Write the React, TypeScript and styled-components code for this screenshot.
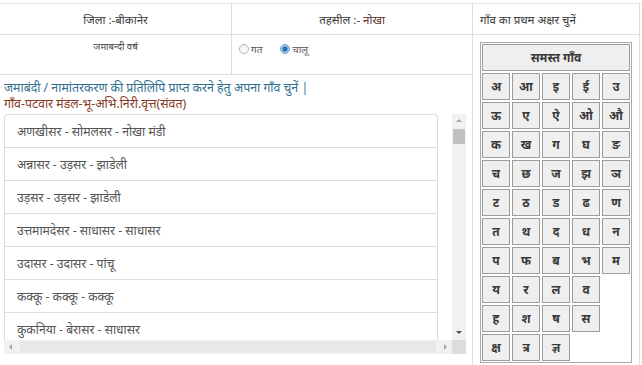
import React from "react";
import styled, { createGlobalStyle } from "styled-components";

const Global = createGlobalStyle`
  html, body { margin: 0; padding: 0; background: #fff; }
  body { font-family: "Noto Sans", "Liberation Sans", sans-serif; color: #333; }
  * { box-sizing: border-box; }
`;

const Page = styled.div`
  width: 642px;
  height: 365px;
  overflow: hidden;
  padding-top: 3px;
`;

const Layout = styled.div`
  display: grid;
  grid-template-columns: 232px 240px 168px;
  grid-template-rows: 31px 40px 290px;
  border-top: 1px solid #e6e6e6;
`;

const Cell = styled.div<{ $right?: boolean; $bottom?: boolean; $left?: boolean }>`
  border-right: ${(p) => (p.$right ? "1px solid #dedede" : "none")};
  border-left: ${(p) => (p.$left ? "1px solid #dedede" : "none")};
  border-bottom: ${(p) => (p.$bottom ? "1px solid #dedede" : "none")};
`;

const HeadCell = styled(Cell)<{ $align?: string }>`
  display: flex;
  align-items: center;
  justify-content: ${(p) => p.$align || "center"};
  padding-left: ${(p) => (p.$align ? "7px" : "0")};
  font-size: 11.5px;
  color: #3a3a3a;
`;

const Maroon = styled.span`
  color: #5c2e2e;
`;

const YearCell = styled(Cell)`
  display: flex;
  justify-content: center;
  padding-top: 5px;
  font-size: 9.5px;
  color: #444;
`;

const RadioCell = styled(Cell)`
  display: flex;
  align-items: flex-start;
  gap: 18px;
  padding: 8px 0 0 7px;
`;

const RadioOpt = styled.label`
  display: flex;
  align-items: center;
  gap: 2px;
  font-size: 10px;
  color: #555;
  line-height: 12px;
`;

const RadioDot = styled.span<{ $on?: boolean }>`
  width: 10px;
  height: 10px;
  border-radius: 50%;
  border: 1px solid ${(p) => (p.$on ? "#6aa3d8" : "#b5b5b5")};
  background: ${(p) =>
    p.$on
      ? "radial-gradient(circle, #2b6fb3 0 2.2px, #8ec0ea 2.8px, #cfe5f7 100%)"
      : "linear-gradient(#f2f2f2, #fff)"};
`;

const LetterCol = styled(Cell)`
  grid-row: 2 / 4;
  grid-column: 3;
  padding: 7px 0 0 7px;
`;

const LetterGrid = styled.div`
  display: grid;
  grid-template-columns: repeat(5, 28px);
  grid-auto-rows: 27px;
  gap: 2px;
  padding: 1px;
  width: 152px;
  border: 1px solid #a9a9a9;
  background: #fff;
`;

const LetterBtn = styled.div<{ $wide?: boolean }>`
  grid-column: ${(p) => (p.$wide ? "1 / 6" : "auto")};
  display: flex;
  align-items: center;
  justify-content: center;
  background: #efefef;
  border: 1px solid #9c9c9c;
  font-size: 12px;
  font-weight: bold;
  color: #3a3a3a;
`;

const ListArea = styled.div`
  grid-column: 1 / 3;
  grid-row: 3;
  padding: 5px 0 0 4px;
`;

const InfoLine = styled.div<{ $tone: string }>`
  font-size: 12.3px;
  line-height: 16px;
  height: 16px;
  color: ${(p) => p.$tone};
  white-space: nowrap;
`;

const ScrollBox = styled.div`
  margin-top: 2px;
  width: 462px;
  height: 240px;
  display: grid;
  grid-template-columns: 448px 14px;
  grid-template-rows: 226px 14px;
`;

const Viewport = styled.div`
  overflow: hidden;
`;

const ListGroup = styled.div`
  width: 434px;
  border: 1px solid #dcdcdc;
  border-bottom: none;
  border-radius: 4px 4px 0 0;
`;

const ListItem = styled.div`
  height: 33px;
  display: flex;
  align-items: center;
  padding-left: 12px;
  border-bottom: 1px solid #dcdcdc;
  font-size: 12.2px;
  color: #555;
  white-space: nowrap;
`;

const VBar = styled.div`
  background: #f1f1f1;
  display: flex;
  flex-direction: column;
`;

const HBar = styled.div`
  background: #f1f1f1;
  display: flex;
  align-items: center;
`;

const Corner = styled.div`
  background: #dcdcdc;
`;

const ArrowBtn = styled.div`
  width: 14px;
  height: 14px;
  flex: none;
  display: flex;
  align-items: center;
  justify-content: center;
`;

const VThumb = styled.div`
  margin: 1px 1px 0 1px;
  height: 15px;
  background: #c1c1c1;
`;

const VSpace = styled.div`
  flex: 1;
`;

const HThumb = styled.div`
  flex: 1;
  height: 12px;
  margin: 0 2px;
  background: #e8e8e8;
`;

const Tri = ({ dir, color }: { dir: "up" | "down" | "left" | "right"; color: string }) => {
  const pts = {
    up: "1,5 4,2 7,5",
    down: "1,2 7,2 4,5",
    left: "5,1 5,7 2,4",
    right: "3,1 3,7 6,4",
  }[dir];
  return (
    <svg width="8" height="8" viewBox="0 0 8 8">
      <polygon points={pts} fill={color} />
    </svg>
  );
};

const letters: string[][] = [
  ["अ", "आ", "इ", "ई", "उ"],
  ["ऊ", "ए", "ऐ", "ओ", "औ"],
  ["क", "ख", "ग", "घ", "ङ"],
  ["च", "छ", "ज", "झ", "ञ"],
  ["ट", "ठ", "ड", "ढ", "ण"],
  ["त", "थ", "द", "ध", "न"],
  ["प", "फ", "ब", "भ", "म"],
  ["य", "र", "ल", "व", ""],
  ["ह", "श", "ष", "स", ""],
  ["क्ष", "त्र", "ज्ञ", "", ""],
];

const villages = [
  "अणखीसर - सोमलसर - नोखा मंडी",
  "अन्नासर - उड़सर - झाडेली",
  "उड़सर - उड़सर - झाडेली",
  "उत्तमामदेसर - साधासर - साधासर",
  "उदासर - उदासर - पांचू",
  "कक्कू - कक्कू - कक्कू",
  "कुकनिया - बेरासर - साधासर",
];

export default function App() {
  return (
    <Page>
      <Global />
      <Layout>
        <HeadCell $right $bottom>जिला :-बीकानेर</HeadCell>
        <HeadCell $bottom>
          तहसील :-&nbsp;<Maroon>नोखा</Maroon>
        </HeadCell>
        <HeadCell $left $right $bottom $align="flex-start">
          गाँव का प्रथम अक्षर चुनें
        </HeadCell>

        <YearCell $right $bottom>जमाबन्दी वर्ष</YearCell>
        <RadioCell $bottom>
          <RadioOpt>
            <RadioDot />
            गत
          </RadioOpt>
          <RadioOpt>
            <RadioDot $on />
            चालू
          </RadioOpt>
        </RadioCell>
        <LetterCol $left $right>
          <LetterGrid>
            <LetterBtn $wide>समस्त गाँव</LetterBtn>
            {letters.flat().map((l, i) =>
              l ? <LetterBtn key={i}>{l}</LetterBtn> : <div key={i} />
            )}
          </LetterGrid>
        </LetterCol>

        <ListArea>
          <InfoLine $tone="#31708f">
            जमाबंदी / नामांतरकरण की प्रतिलिपि प्राप्त करने हेतु अपना गाँव चुनें |
          </InfoLine>
          <InfoLine $tone="#843a24">गाँव-पटवार मंडल-भू-अभि.निरी.वृत्त(संवत)</InfoLine>
          <ScrollBox>
            <Viewport>
              <ListGroup>
                {villages.map((v) => (
                  <ListItem key={v}>{v}</ListItem>
                ))}
              </ListGroup>
            </Viewport>
            <VBar>
              <ArrowBtn>
                <Tri dir="up" color="#a8a8a8" />
              </ArrowBtn>
              <VThumb />
              <VSpace />
              <ArrowBtn>
                <Tri dir="down" color="#505050" />
              </ArrowBtn>
            </VBar>
            <HBar>
              <ArrowBtn>
                <Tri dir="left" color="#a8a8a8" />
              </ArrowBtn>
              <HThumb />
              <ArrowBtn>
                <Tri dir="right" color="#a8a8a8" />
              </ArrowBtn>
            </HBar>
            <Corner />
          </ScrollBox>
        </ListArea>
      </Layout>
    </Page>
  );
}
